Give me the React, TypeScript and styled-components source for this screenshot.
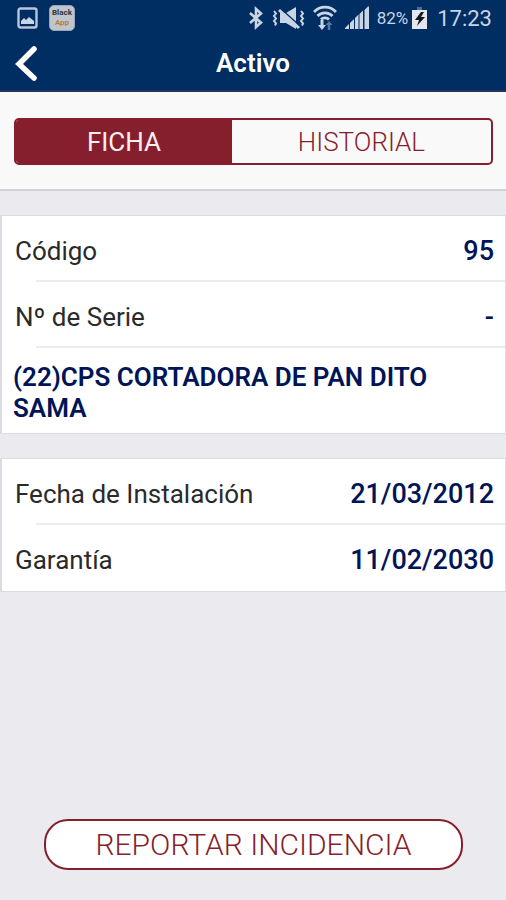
import React, { useState } from "react";
import styled, { createGlobalStyle } from "styled-components";

const navy = "#002d62";
const maroon = "#861f2d";
const ink = "#001557";
const grey = "#ebeaee";

const GlobalStyle = createGlobalStyle`
  *, *::before, *::after { box-sizing: border-box; }
  body {
    margin: 0;
    background: ${grey};
    color: #2a2a2a;
    font-family: Roboto, "Liberation Sans", sans-serif;
    font-size: 26px;
  }
  button { font: inherit; padding: 0; cursor: pointer; }
`;

const Screen = styled.div`
  display: flex;
  flex-direction: column;
  min-height: 100vh;
`;

const TopArea = styled.div`
  background: ${navy};
  border-bottom: 2px solid #24345c;
`;

const StatusBar = styled.div`
  display: flex;
  justify-content: space-between;
  align-items: center;
  height: 36px;
  padding: 0 14px 0 17px;
  color: #c9d4e4;
`;

const StatusGroup = styled.div<{ $gap: number }>`
  display: flex;
  align-items: center;
  gap: ${(p) => p.$gap}px;

  svg { display: block; }
`;

const AppBadge = styled.span`
  display: flex;
  flex-direction: column;
  justify-content: center;
  align-items: center;
  width: 26px;
  height: 26px;
  border: 1px solid #98a5b5;
  border-radius: 5px;
  background: #bfc6cb;
  color: #30353b;
  font-size: 8px;
  font-weight: 700;
  line-height: 10px;
`;

const BadgeAccent = styled.span`
  color: #b9784f;
`;

const Percent = styled.span`
  font-size: 17px;
`;

const Clock = styled.time`
  font-size: 22px;
`;

const TitleBar = styled.header`
  display: grid;
  grid-template-columns: 56px 1fr 56px;
  align-items: center;
  height: 54px;
`;

const BackButton = styled.button`
  display: flex;
  align-items: center;
  height: 54px;
  padding-left: 14px;
  border: 0;
  background: none;
  color: #fff;
`;

const Title = styled.h1`
  margin: 0;
  color: #fff;
  font-size: 26px;
  font-weight: 600;
  line-height: 54px;
  text-align: center;
`;

const TabArea = styled.div`
  padding: 26px 13px 24px 14px;
  border-bottom: 2px solid #d3d3d5;
  background: #f9f9f9;
`;

const Tabs = styled.div`
  display: flex;
  height: 47px;
  overflow: hidden;
  border: 2px solid ${maroon};
  border-radius: 5px;
`;

const Tab = styled.button<{ $grow: number; $active: boolean }>`
  flex: ${(p) => p.$grow} 1 0;
  border: 0;
  background: ${(p) => (p.$active ? maroon : "transparent")};
  color: ${(p) => (p.$active ? "#fbeff0" : maroon)};
  font-weight: ${(p) => (p.$active ? 400 : 300)};
`;

const Main = styled.main`
  display: flex;
  flex: 1;
  flex-direction: column;
  gap: 24px;
  padding: 24px 0 30px;
`;

const Card = styled.dl`
  margin: 0;
  border: solid #dcdbe1;
  border-width: 1px 1px 1px 2px;
  background: #fff;
`;

const Row = styled.div`
  display: flex;
  justify-content: space-between;
  align-items: center;
  height: 66px;
  padding: 4px 11px 0 13px;
`;

const Divider = styled.div`
  height: 2px;
  margin: -2px 0 0 34px;
  background: #ececee;
`;

const Label = styled.dt``;

const Value = styled.dd`
  margin: 0;
  color: ${ink};
  font-size: 27px;
  font-weight: 500;
`;

const Description = styled.dd`
  margin: 0;
  padding: 14px 48px 9px 11px;
  color: ${ink};
  font-weight: 600;
  line-height: 31px;
`;

const ReportButton = styled.button`
  height: 51px;
  margin: auto 43px 0 44px;
  border: 2px solid ${maroon};
  border-radius: 24px;
  background: #fff;
  color: ${maroon};
  font-size: 30px;
  font-weight: 300;
`;

function PictureIcon() {
  return (
    <svg width="21" height="22" viewBox="0 0 21 22" aria-hidden="true">
      <rect x="1.5" y="1.5" width="18" height="19" rx="2" fill="none" stroke="#b9c5da" strokeWidth="2.4" />
      <path d="M4 17v-3l3-3 2 2 3-3 5 4v3z" fill="#c9d6e8" />
    </svg>
  );
}

function BluetoothIcon() {
  return (
    <svg width="16" height="24" viewBox="0 0 16 24" fill="none" stroke="currentColor" strokeWidth="2.600" aria-hidden="true">
      <path d="M2 7l11 9.500-5 4.500V3L13 7.500 2 17" />
    </svg>
  );
}

function MuteVibrateIcon() {
  return (
    <svg width="33" height="24" viewBox="0 0 33 24" aria-hidden="true">
      <path d="M8 7h6l10-6v22l-10-6H8z" fill="currentColor" />
      <path d="M9 3l18 16" stroke={navy} strokeWidth="1.500" />
      <path d="M7 4l20 18" stroke="currentColor" strokeWidth="3" />
      <g fill="none" stroke="currentColor" strokeWidth="2">
        <path d="M2 5l2 2.500-2 2.500 2 2.500-2 2.500 2 2.500-1 2" />
        <path d="M29 5l2 2.500-2 2.500 2 2.500-2 2.500 2 2.500-1 2" />
      </g>
    </svg>
  );
}

function WifiIcon() {
  return (
    <svg width="24" height="26" viewBox="0 0 24 26" fill="none" stroke="currentColor" aria-hidden="true">
      <path d="M1 7C7 .5 17 .5 23 7M4.500 11c4-4.300 11-4.300 15 0M8 14.500c2-2.300 6-2.300 8 0" strokeWidth="2.800" />
      <path d="M9 15v6" strokeWidth="3" />
      <path d="M5 20h8l-4 5z" fill="currentColor" stroke="none" />
      <path d="M16 25v-6" stroke="#5878a2" strokeWidth="2.500" />
      <path d="M12.500 20l3.500-4 3.500 4z" fill="#5878a2" stroke="none" />
    </svg>
  );
}

function SignalIcon() {
  return (
    <svg width="24" height="24" viewBox="0 0 24 24" fill="currentColor" aria-hidden="true">
      <path d="M0 23v-1l4-4v5zM5 23v-6l4-4v10zM10 23V12l3.500-3.500V23zM14.500 23V8L18 4.500V23zM19.500 23V4L23 .5h1V23z" />
    </svg>
  );
}

function BatteryIcon() {
  return (
    <svg width="15" height="22" viewBox="0 0 15 22" aria-hidden="true">
      <path d="M5 0h5v3H5z" fill="#526c94" />
      <path d="M0 3h15v19H0z" fill="#e3e7ed" />
      <path d="M9 5l-6 8h4l-2 6 8-9H9l3-5z" fill="#131720" />
    </svg>
  );
}

function BackIcon() {
  return (
    <svg width="24" height="36" viewBox="0 0 24 36" fill="none" aria-hidden="true">
      <path d="M20 4L5 19l15 14" stroke="currentColor" strokeWidth="5.500" strokeLinecap="round" />
    </svg>
  );
}

const tabs = [
  { id: "ficha", label: "FICHA", grow: 5 },
  { id: "historial", label: "HISTORIAL", grow: 6 },
];

export default function App() {
  const [active, setActive] = useState("ficha");

  return (
    <>
      <GlobalStyle />
      <Screen>
        <TopArea>
          <StatusBar>
            <StatusGroup $gap={11}>
              <PictureIcon />
              <AppBadge>
                Black
                <BadgeAccent>App</BadgeAccent>
              </AppBadge>
            </StatusGroup>
            <StatusGroup $gap={10}>
              <StatusGroup $gap={8}>
                <BluetoothIcon />
                <MuteVibrateIcon />
                <WifiIcon />
                <SignalIcon />
                <StatusGroup $gap={4}>
                  <Percent>82%</Percent>
                  <BatteryIcon />
                </StatusGroup>
              </StatusGroup>
              <Clock>17:23</Clock>
            </StatusGroup>
          </StatusBar>
          <TitleBar>
            <BackButton type="button" aria-label="Atrás">
              <BackIcon />
            </BackButton>
            <Title>Activo</Title>
          </TitleBar>
        </TopArea>

        <TabArea>
          <Tabs role="tablist">
            {tabs.map((tab) => (
              <Tab
                key={tab.id}
                type="button"
                role="tab"
                aria-selected={active === tab.id}
                $grow={tab.grow}
                $active={active === tab.id}
                onClick={() => setActive(tab.id)}
              >
                {tab.label}
              </Tab>
            ))}
          </Tabs>
        </TabArea>

        <Main>
          <Card>
            <Row>
              <Label>Código</Label>
              <Value>95</Value>
            </Row>
            <Divider />
            <Row>
              <Label>Nº de Serie</Label>
              <Value>-</Value>
            </Row>
            <Divider />
            <Description>(22)CPS CORTADORA DE PAN DITO SAMA</Description>
          </Card>
          <Card>
            <Row>
              <Label>Fecha de Instalación</Label>
              <Value>21/03/2012</Value>
            </Row>
            <Divider />
            <Row>
              <Label>Garantía</Label>
              <Value>11/02/2030</Value>
            </Row>
          </Card>
          <ReportButton type="button">REPORTAR INCIDENCIA</ReportButton>
        </Main>
      </Screen>
    </>
  );
}
